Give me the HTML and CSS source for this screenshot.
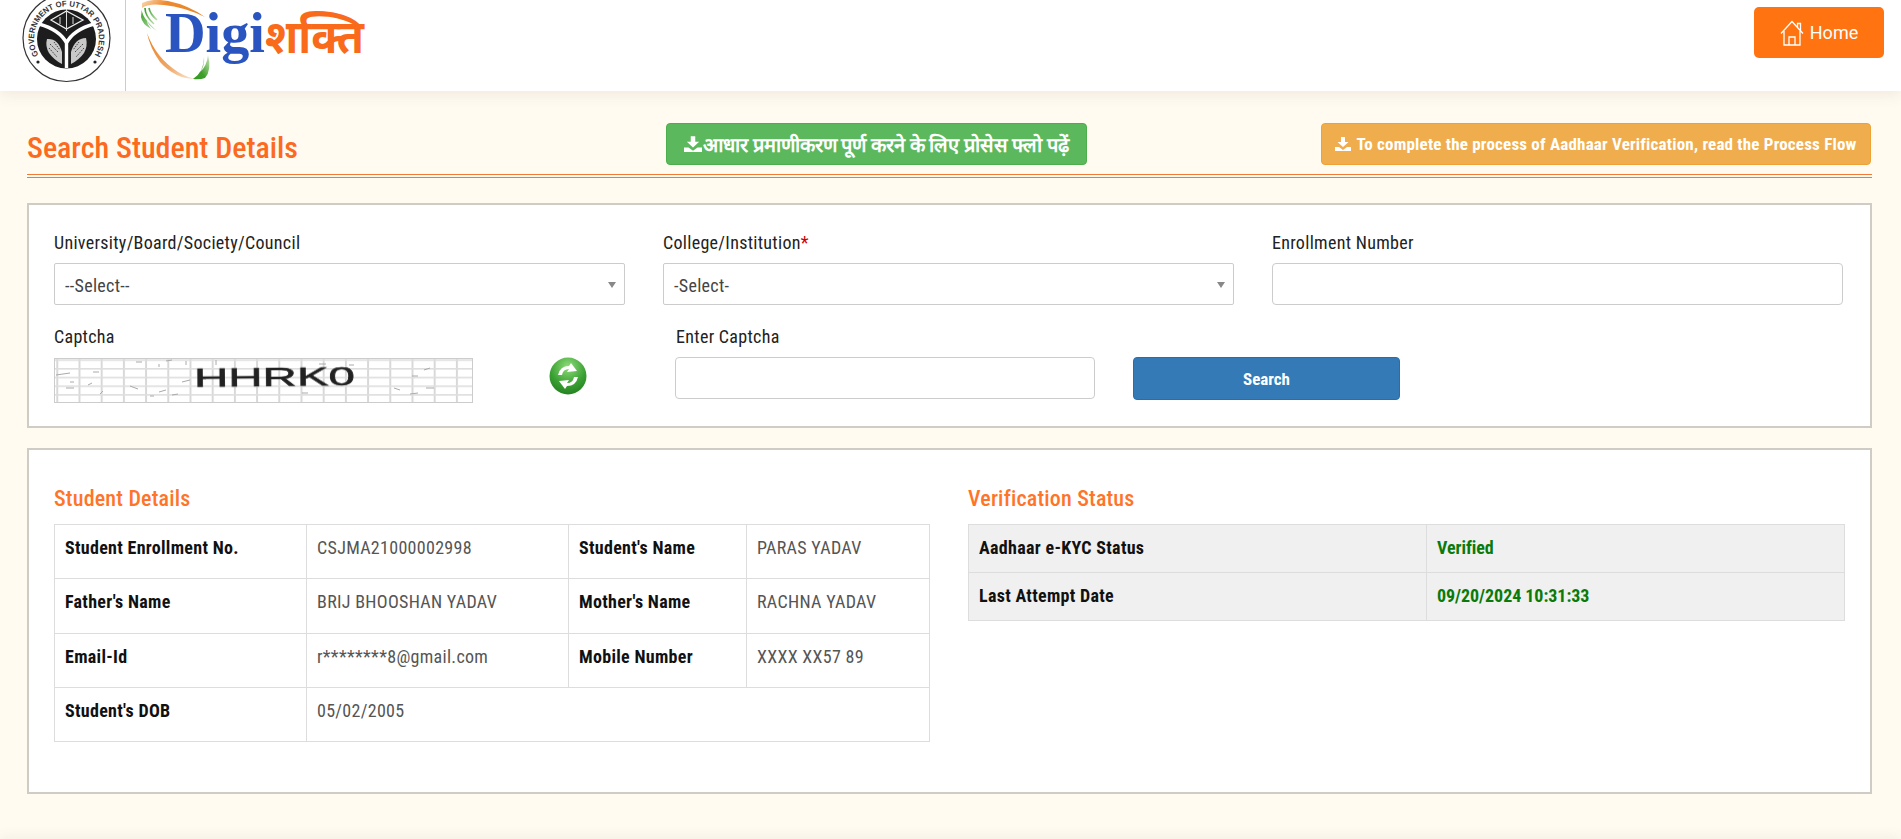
FILE: index.html
```html
<!DOCTYPE html>
<html lang="en">
<head>
    <meta charset="UTF-8">
    <meta name="viewport" content="width=device-width, initial-scale=1.0">
    <title>Search Student Details</title>
    <link rel="stylesheet" href="styles.css">
</head>
<body>

    <header class="topbar">
        <div class="emblem">
            <svg width="125" height="91" viewBox="0 0 125 91">
                <defs>
                    <path id="ring" d="M39 56 A32.5 32.5 0 1 1 94 56"/>
                </defs>
                <circle cx="66.5" cy="38" r="43.5" fill="#fff" stroke="#333" stroke-width="1.2"/>
                <text class="ring-text"><textPath href="#ring" startOffset="50%" text-anchor="middle" textLength="136" lengthAdjust="spacingAndGlyphs">GOVERNMENT OF UTTAR PRADESH</textPath></text>
                <circle cx="66.5" cy="39" r="29.5" fill="#1d1d1d"/>
                <!-- trident lines -->
                <path d="M39 24 Q60 30 66.5 43 Q73 30 94 24 M66.5 43 V68" fill="none" stroke="#fff" stroke-width="3.4"/>
                <!-- bow -->
                <path d="M51 20 L66.5 11 L83 20 L66.5 29 Z" fill="none" stroke="#eee" stroke-width="1.3"/>
                <path d="M66.5 9 V31 M60 17 V24 M73 17 V24" stroke="#ddd" stroke-width="1"/>
                <!-- fishes -->
                <path d="M47 39 Q58 38 62 52 Q62 60 62 64 Q54 60 49 53 Q45 46 47 39 Z" fill="#c9c9c9"/>
                <path d="M86 38 Q75 38 71 52 Q71 60 71 64 Q79 60 84 53 Q88 46 86 38 Z" fill="#c9c9c9"/>
                <path d="M50 44 L58 52 M49 48 L57 57 M54 42 L60 50 M83 44 L75 52 M84 48 L76 57 M79 42 L73 50" stroke="#444" stroke-width="1" stroke-dasharray="1.5 1"/>
                <circle cx="38" cy="62" r="1.6" fill="#222"/>
                <circle cx="95" cy="62" r="1.6" fill="#222"/>
            </svg>
        </div>
        <div class="logo">
            <svg width="260" height="91" viewBox="0 0 260 91">
                <defs>
                    <linearGradient id="sw-top" x1="0" y1="0" x2="1" y2="0.3">
                        <stop offset="0" stop-color="#fbdcb9"/>
                        <stop offset="0.4" stop-color="#ee8a2e"/>
                        <stop offset="1" stop-color="#e8862a"/>
                    </linearGradient>
                    <linearGradient id="sw-low" x1="0" y1="0" x2="1" y2="1">
                        <stop offset="0" stop-color="#e8801f"/>
                        <stop offset="0.6" stop-color="#f0a868"/>
                        <stop offset="1" stop-color="#fdf0e2"/>
                    </linearGradient>
                    <linearGradient id="sw-g1" x1="0" y1="0" x2="1" y2="1">
                        <stop offset="0" stop-color="#2f9a1f"/>
                        <stop offset="1" stop-color="#cfe8c0"/>
                    </linearGradient>
                    <linearGradient id="sw-g2" x1="1" y1="0" x2="0" y2="1">
                        <stop offset="0" stop-color="#cfe8c0"/>
                        <stop offset="0.6" stop-color="#3f9f2b"/>
                        <stop offset="1" stop-color="#2f9a1f"/>
                    </linearGradient>
                </defs>
                <path d="M16 3 Q26 -2 42 1 Q62 5 79 17 Q58 7 38 5 Q22 3 16 8 Z" fill="url(#sw-top)"/>
                <path d="M16 8 Q14 16 31 31 Q22 26 20 18 Q21 24 25 29 Q16 24 15 17 Z" fill="url(#sw-g1)"/>
                <path d="M19 8 Q19 16 28 24 M23 8 Q24 14 31 20" fill="none" stroke="url(#sw-g1)" stroke-width="1.6"/>
                <path d="M21 33 Q30 58 52 72 Q62 78 72 79 Q50 80 34 62 Q24 48 21 33 Z" fill="url(#sw-low)"/>
                <path d="M82 55 Q86 70 79 78 Q74 80 67 79 Q78 72 78 57 Q79 66 74 72 Q81 66 82 55 Z" fill="url(#sw-g2)"/>
                <text x="39" y="52" class="logo-digi" textLength="100" lengthAdjust="spacingAndGlyphs">Digi</text>
                <text x="139" y="53" class="logo-shakti" textLength="99" lengthAdjust="spacingAndGlyphs">शक्ति</text>
            </svg>
        </div>
        <a class="home-btn" href="#">
            <svg width="24" height="26" viewBox="0 0 24 26" fill="none" stroke="#fff" stroke-width="1.3">
                <path d="M1 13.5 L12 1.5 L23 13.5 M17.5 7.5 V3.5 H20.5 V10.5 M4 11 V25 H20 V11 M9 25 V17 H15 V25"/>
            </svg>
            Home
        </a>
    </header>

    <main class="page">
        <div class="title-row">
            <h2>Search Student Details</h2>
            <a class="flow-btn green" href="#">
                <svg class="dl-icon" viewBox="0 0 16 16"><path d="M6 1 H10 V6 H13.5 L8 11 L2.5 6 H6 Z M0 11 H4 L8 14 L12 11 H16 V15 H0 Z" fill="#fff"/></svg>आधार प्रमाणीकरण पूर्ण करने के लिए प्रोसेस फ्लो पढ़ें
            </a>
            <a class="flow-btn amber" href="#">
                <svg class="dl-icon" viewBox="0 0 16 16"><path d="M6 1 H10 V6 H13.5 L8 11 L2.5 6 H6 Z M0 11 H4 L8 14 L12 11 H16 V15 H0 Z" fill="#fff"/></svg>&nbsp;To complete the process of Aadhaar Verification, read the Process Flow
            </a>
        </div>

        <section class="box search-box">
            <div class="form-row">
                <div class="field">
                    <label>University/Board/Society/Council</label>
                    <div class="select">--Select--</div>
                </div>
                <div class="field">
                    <label>College/Institution<span class="req">*</span></label>
                    <div class="select">-Select-</div>
                </div>
                <div class="field">
                    <label>Enrollment Number</label>
                    <input type="text">
                </div>
            </div>
            <div class="form-row captcha-row">
                <div class="captcha-field">
                    <label>Captcha</label>
                    <svg class="captcha-img" width="419" height="45" viewBox="0 0 419 45">
                        <defs>
                            <pattern id="grid-v" x="24.5" y="0" width="22.2" height="45" patternUnits="userSpaceOnUse">
                                <rect width="2" height="45" fill="#d8d8d8"/>
                            </pattern>
                            <pattern id="grid-h" x="0" y="10" width="419" height="8.7" patternUnits="userSpaceOnUse">
                                <rect width="419" height="1.6" fill="#dedede"/>
                            </pattern>
                        </defs>
                        <rect width="419" height="45" fill="#fff"/>
                        <rect width="419" height="45" fill="url(#grid-v)"/>
                        <rect width="419" height="45" fill="url(#grid-h)"/>
                        <path d="M2 17 L16 15 M12 30 L20 30 M16 24 L20 24 M39 14 L45 14 M46 36 L49 33 M82 4 L88 4 M76 28 L84 31 M34 27 L38 25 M96 38 L100 38 M112 3 L118 2 M105 6 V9 M105 34 L112 32 M118 37 L124 36 M128 24 L136 22 M132 3 V7 M162 2 V7 M146 21 H152 M248 35 H254 M265 6 L272 6 M295 7 H300 M340 30 L346 32 M358 18 H364 M356 36 L364 35 M370 12 L376 10 M372 30 L380 30" stroke="#aaa" stroke-width="1"/>
                        <text x="140" y="28" class="captcha-text" textLength="161" lengthAdjust="spacingAndGlyphs" transform="rotate(-0.6 220 20)">HHRK0</text>
                        <rect x="0.5" y="0.5" width="418" height="44" fill="none" stroke="#ccc"/>
                    </svg>
                </div>
                <div class="refresh">
                    <svg width="38" height="38" viewBox="0 0 38 38">
                        <defs>
                            <radialGradient id="ball" cx="50%" cy="25%" r="80%">
                                <stop offset="0" stop-color="#8fdc7a"/>
                                <stop offset="0.6" stop-color="#3aa033"/>
                                <stop offset="1" stop-color="#217d1f"/>
                            </radialGradient>
                        </defs>
                        <circle cx="19" cy="19" r="18.5" fill="url(#ball)"/>
                        <path d="M9 18 Q11 9 20 9 L22 6 L28 14 L18 15 L20 12 Q14 12 13 18 Z M29 20 Q27 29 18 29 L16 32 L10 24 L20 23 L18 26 Q24 26 25 20 Z" fill="#fff"/>
                    </svg>
                </div>
                <div class="enter-captcha">
                    <label>Enter Captcha</label>
                    <input type="text">
                </div>
                <button class="search-btn">Search</button>
            </div>
        </section>

        <section class="box result-box">
            <div class="result-col left">
                <h4>Student Details</h4>
                <table class="details">
                    <tr class="r54">
                        <th class="c1">Student Enrollment No.</th>
                        <td class="c2">CSJMA21000002998</td>
                        <th class="c3">Student's Name</th>
                        <td>PARAS YADAV</td>
                    </tr>
                    <tr class="r55">
                        <th>Father's Name</th>
                        <td>BRIJ BHOOSHAN YADAV</td>
                        <th>Mother's Name</th>
                        <td>RACHNA YADAV</td>
                    </tr>
                    <tr class="r54">
                        <th>Email-Id</th>
                        <td>r********8@gmail.com</td>
                        <th>Mobile Number</th>
                        <td>XXXX XX57 89</td>
                    </tr>
                    <tr class="r54">
                        <th>Student's DOB</th>
                        <td colspan="3">05/02/2005</td>
                    </tr>
                </table>
            </div>
            <div class="result-col right">
                <h4>Verification Status</h4>
                <table class="status">
                    <tr>
                        <th>Aadhaar e-KYC Status</th>
                        <td>Verified</td>
                    </tr>
                    <tr>
                        <th>Last Attempt Date</th>
                        <td>09/20/2024 10:31:33</td>
                    </tr>
                </table>
            </div>
        </section>
    </main>

    <footer class="foot"></footer>

</body>
</html>
```

FILE: styles.css
```css
* {
    box-sizing: border-box;
}
html, body {
    height: 100%;
}
body {
    font-family: "Roboto Condensed", "Liberation Sans Narrow", Roboto, sans-serif;
    font-stretch: 75%;
    font-size: 18px;
    letter-spacing: 0.3px;
    margin: 0;
    padding: 0;
    background: #fffbf1;
    color: #222;
    overflow: hidden;
}
.topbar {
    height: 91px;
    background: white;
    display: flex;
    align-items: flex-start;
    box-shadow: 0 3px 14px rgba(120, 100, 70, 0.12);
    padding-right: 17px;
    letter-spacing: 0;
}
.emblem {
    width: 126px;
    height: 91px;
    border-right: 1px solid #ccc;
}
.emblem svg, .logo svg {
    display: block;
}
.ring-text {
    font-family: "Liberation Sans", sans-serif;
    font-stretch: 100%;
    font-weight: bold;
    font-size: 8px;
    fill: #333;
}
.logo-digi {
    font-family: "Liberation Serif", serif;
    font-stretch: 100%;
    font-weight: bold;
    font-size: 56px;
    fill: #2a55c0;
}
.logo-shakti {
    font-family: "Noto Sans Devanagari", "Lohit Devanagari", "Noto Sans", sans-serif;
    font-stretch: 100%;
    font-size: 46px;
    font-weight: bold;
    fill: #f96a1b;
}
.home-btn {
    margin-left: auto;
    margin-top: 7px;
    width: 130px;
    height: 51px;
    background: #ff7410;
    color: white;
    border-radius: 5px;
    display: flex;
    align-items: center;
    justify-content: center;
    gap: 6px;
    text-decoration: none;
    font-family: Roboto, sans-serif;
    font-stretch: 100%;
    font-size: 18px;
}
.page {
    padding: 0 29px 0 27px;
}
.title-row {
    height: 87px;
    border-bottom: 1px solid #f37a36;
    display: flex;
    align-items: flex-start;
    position: relative;
    padding-top: 32px;
}
.title-row::after {
    content: "";
    position: absolute;
    left: 0;
    right: 0;
    bottom: 2px;
    border-bottom: 1px solid #f37a36;
}
h2 {
    margin: 0;
    width: 639px;
    padding-top: 7px;
    font-size: 30px;
    letter-spacing: 0;
    font-weight: 500;
    color: #fb6a1e;
}
.flow-btn {
    height: 42px;
    border-radius: 4px;
    color: white;
    font-weight: bold;
    display: flex;
    align-items: center;
    justify-content: center;
    text-decoration: none;
}
.flow-btn.green {
    width: 421px;
    background: #5cb85c;
    border: 1px solid #4cae4c;
    font-size: 20px;
    letter-spacing: 0;
}
.flow-btn.green .dl-icon {
    width: 18px;
    height: 18px;
}
.flow-btn.amber {
    width: 550px;
    margin-left: 234px;
    background: #f0ad4e;
    border: 1px solid #eea236;
    font-size: 17px;
    letter-spacing: 0.2px;
}
.dl-icon {
    width: 16px;
    height: 16px;
    margin-right: 1px;
}
.box {
    background: white;
    border: 2px solid #cfccc6;
}
.search-box {
    margin-top: 25px;
    height: 225px;
    padding: 26px 25px 0;
}
.form-row {
    display: flex;
    gap: 38px;
}
.field {
    flex: 0 0 571px;
}
label {
    display: block;
    line-height: 24px;
    margin-bottom: 8px;
    color: #222;
}
.req {
    color: #c00;
}
.select, input {
    display: block;
    width: 100%;
    height: 42px;
    border: 1px solid #ccc;
    border-radius: 4px;
    background: white;
    color: #444;
    font-size: 18px;
}
.select {
    position: relative;
    line-height: 44px;
    padding-left: 10px;
    border-radius: 2px;
}
.select::after {
    content: "";
    position: absolute;
    right: 8px;
    top: 18px;
    border: 4px solid transparent;
    border-top: 6px solid #888;
    border-bottom: 0;
}
.captcha-row {
    margin-top: 20px;
    gap: 0;
    align-items: flex-start;
}
.captcha-field {
    width: 419px;
}
.captcha-field label {
    margin-bottom: 9px;
}
.captcha-img {
    display: block;
}
.captcha-text {
    font-family: "Liberation Sans", sans-serif;
    font-stretch: 100%;
    font-size: 25px;
    letter-spacing: 0;
    fill: #222;
    stroke: #222;
    stroke-width: 0.5px;
    filter: blur(0.5px);
}
.refresh {
    width: 202px;
    padding: 32px 0 0 76px;
}
.enter-captcha {
    width: 420px;
}
.enter-captcha label {
    padding-left: 1px;
    margin-bottom: 8px;
}
.search-btn {
    width: 267px;
    height: 43px;
    margin: 32px 0 0 38px;
    background: #337ab7;
    border: 1px solid #2e6da4;
    border-radius: 4px;
    color: white;
    font-family: inherit;
    font-stretch: inherit;
    font-weight: bold;
    font-size: 17px;
}
.result-box {
    margin-top: 20px;
    height: 346px;
    padding: 36px 25px 0;
    display: flex;
}
.result-col.left {
    width: 876px;
}
.result-col.right {
    width: 877px;
    margin-left: 38px;
}
h4 {
    margin: 0 0 12px;
    font-size: 22px;
    letter-spacing: 0.2px;
    line-height: 26px;
    font-weight: 500;
    color: #ff7429;
}
table {
    width: 100%;
    border-collapse: collapse;
    table-layout: fixed;
}
th, td {
    border: 1px solid #ddd;
    text-align: left;
    vertical-align: top;
    padding: 11px 10px;
    line-height: 24px;
}
th {
    color: #111;
}
td {
    color: #555;
}
.details .r54 {
    height: 54px;
}
.details .r55 {
    height: 55px;
}
.details .c1 {
    width: 252px;
}
.details .c2 {
    width: 262px;
}
.details .c3 {
    width: 178px;
}
.status tr {
    height: 48px;
}
.status th, .status td {
    background: #f0f0f0;
}
.status th {
    width: 458px;
}
.status td {
    color: #0a7a0a;
    font-weight: bold;
    letter-spacing: -0.05px;
}
.foot {
    position: fixed;
    left: 0;
    right: 0;
    bottom: -10px;
    height: 10px;
    box-shadow: 0 0 14px rgba(120, 100, 70, 0.12);
}
```
